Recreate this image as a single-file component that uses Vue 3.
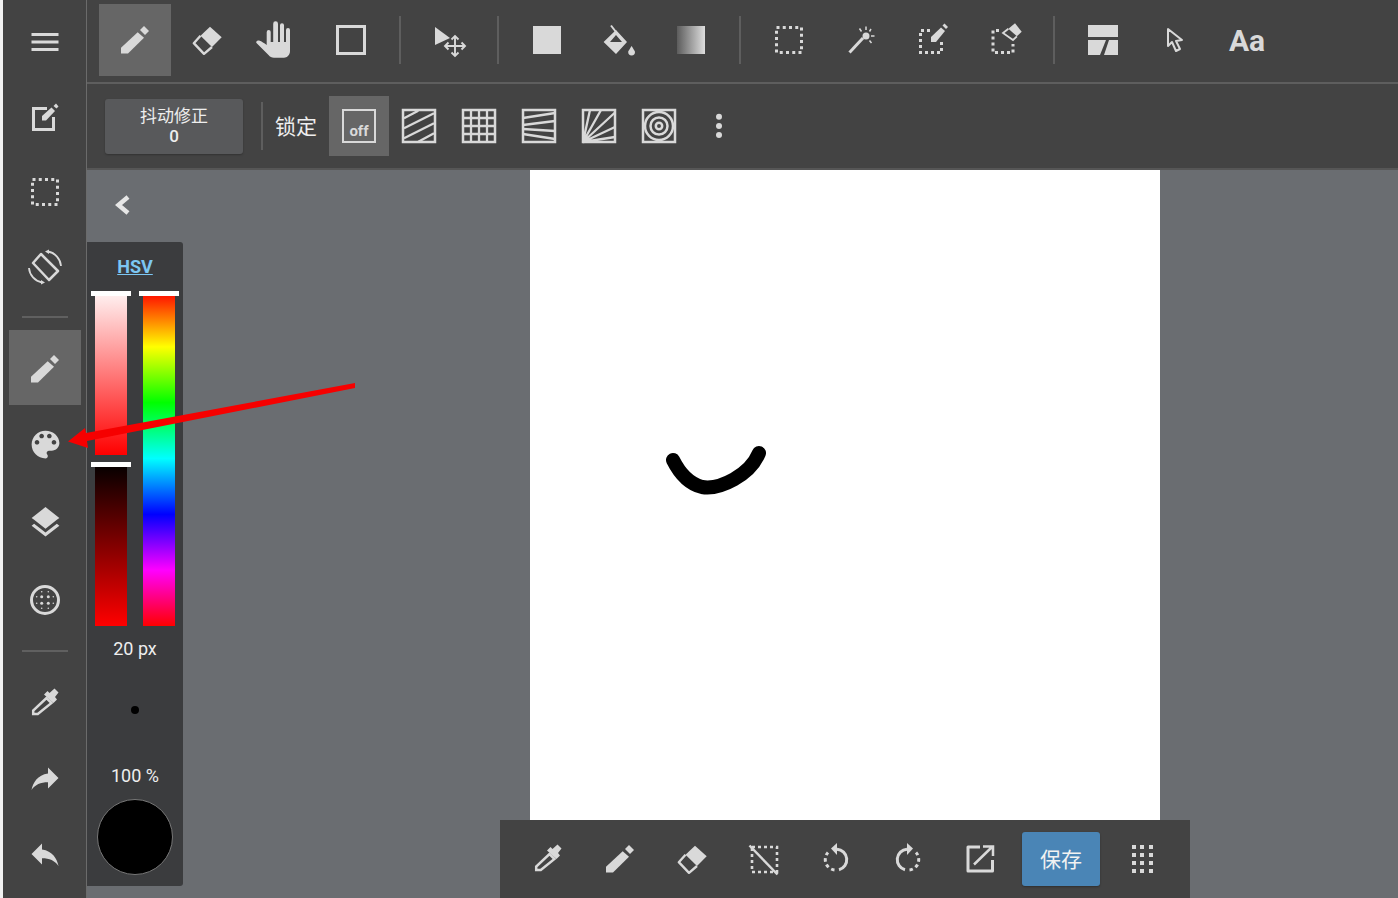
<template>
  <div class="app">
    <!-- shared icons -->
    <svg class="defs" aria-hidden="true">
      <symbol id="i-pencil" viewBox="0 0 40 40">
        <path d="M6 33.5V27.7L22.7 12.3 29 17.7 13 33.5Z" />
        <path d="M25 10 29 6 34 11 30 15Z" />
      </symbol>
      <symbol id="i-eraser" viewBox="0 0 40 40">
        <path d="M13.5 15.8 23 6.7 34.7 17.3 25 27Z" />
        <path d="M13.5 15.8 6.8 23.2 17 33.8 25 27" fill="none" stroke="#d9d9d9" stroke-width="2.4" stroke-linejoin="round" />
      </symbol>
      <symbol id="i-dropper" viewBox="0 0 40 40">
        <path d="M19 11.5 22.5 8 24.5 10 29.5 5.5 33.5 9.5 30 14 32 16.5 28.5 20Z" />
        <path d="M8.2 31V27.5L21.5 15 26.5 20 12.8 31Z" fill="none" stroke="#d9d9d9" stroke-width="2.5" />
      </symbol>
      <symbol id="i-dotted" viewBox="0 0 40 40">
        <rect x="7.5" y="7.5" width="25" height="25" fill="none" stroke="#d9d9d9" stroke-width="3" stroke-dasharray="3 3.25" />
      </symbol>
      <symbol id="i-reply" viewBox="0 0 24 24">
        <path d="M10 9V5l-7 7 7 7v-4.1c5 0 8.5 1.6 11 5.1-1-5-4-10-11-11z" />
      </symbol>
      <symbol id="i-circle-arrow" viewBox="0 0 40 40">
        <path d="M15 9.5 21 4V16Z" />
        <path d="M21 10.2A10.5 10.5 0 0 1 23 30.8" fill="none" stroke="#d9d9d9" stroke-width="3" />
        <path d="M18.5 31A10.5 10.5 0 0 1 12 13.5" fill="none" stroke="#d9d9d9" stroke-width="3" stroke-dasharray="3.5 3" />
      </symbol>
    </svg>

    <div class="edge"></div>

    <aside class="sidebar">
      <div class="side-btn">
        <svg class="ic" viewBox="0 0 40 40"><path d="M6.5 11h27v3h-27zM6.5 18.5h27v3h-27zM6.5 26h27v3h-27z" /></svg>
      </div>
      <div class="side-btn">
        <svg class="ic" viewBox="0 0 40 40">
          <path d="M22 11.5H8.5V32.5H28.5V20" fill="none" stroke="#d9d9d9" stroke-width="3" />
          <path d="M17 23.5V19L26.5 10.5 30 14 21 23.5Z" />
          <path d="M28.5 9 31 6.5 33.5 9.5 31.5 11.5Z" />
        </svg>
      </div>
      <div class="side-btn"><svg class="ic"><use href="#i-dotted" /></svg></div>
      <div class="side-btn">
        <svg class="ic" viewBox="0 0 40 40">
          <path d="M16 7 33 24 24 33 8 16Z" fill="none" stroke="#d9d9d9" stroke-width="2.5" stroke-linejoin="round" />
          <path d="M23 4.5A16 16 0 0 1 36 19M4 21A16 16 0 0 0 17 35.5" fill="none" stroke="#d9d9d9" stroke-width="1.8" />
          <path d="M20 4.5 24 2.5V7ZM20 35.5 16 33V37.5Z" />
        </svg>
      </div>
      <div class="side-sep first"></div>
      <div class="side-btn active"><svg class="ic"><use href="#i-pencil" /></svg></div>
      <div class="side-btn h78">
        <svg class="ic-md" viewBox="0 0 24 24">
          <path d="M12 3c-4.97 0-9 4.03-9 9s4.03 9 9 9c.83 0 1.5-.67 1.5-1.5 0-.39-.15-.74-.39-1.01-.23-.26-.38-.61-.38-.99 0-.83.67-1.5 1.5-1.5H16c2.76 0 5-2.24 5-5 0-4.42-4.03-8-9-8zm-5.5 9c-.83 0-1.5-.67-1.5-1.5S5.67 9 6.5 9 8 9.67 8 10.5 7.33 12 6.5 12zm3-4C8.67 8 8 7.33 8 6.5S8.67 5 9.5 5s1.5.67 1.5 1.5S10.33 8 9.5 8zm5 0c-.83 0-1.5-.67-1.5-1.5S13.67 5 14.5 5s1.5.67 1.5 1.5S15.33 8 14.5 8zm3 4c-.83 0-1.5-.67-1.5-1.5S16.67 9 17.5 9s1.5.67 1.5 1.5-.67 1.5-1.5 1.5z" />
        </svg>
      </div>
      <div class="side-btn h78">
        <svg class="ic-md" viewBox="0 0 24 24">
          <path d="M11.99 18.54l-7.37-5.73L3 14.07l9 7 9-7-1.63-1.27-7.38 5.74zM12 16l7.36-5.73L21 9l-9-7-9 7 1.63 1.27L12 16z" />
        </svg>
      </div>
      <div class="side-btn h78">
        <svg class="ic" viewBox="0 0 40 40">
          <circle cx="20" cy="20" r="13.5" fill="none" stroke="#d9d9d9" stroke-width="3" />
          <circle v-for="d in gridDots" :key="d.k" :cx="d.x" :cy="d.y" :r="d.r" />
        </svg>
      </div>
      <div class="side-sep second"></div>
      <div class="side-btn h76"><svg class="ic"><use href="#i-dropper" /></svg></div>
      <div class="side-btn h76">
        <svg class="ic-reply"><use href="#i-reply" transform="matrix(-1 0 0 1 36 -1)" width="36" height="36" /></svg>
      </div>
      <div class="side-btn h76">
        <svg class="ic-reply"><use href="#i-reply" y="-1" width="36" height="36" /></svg>
      </div>
    </aside>

    <main class="main">
      <div class="toolbar">
        <div class="tool active"><svg class="ic"><use href="#i-pencil" /></svg></div>
        <div class="tool"><svg class="ic"><use href="#i-eraser" /></svg></div>
        <div class="tool">
          <svg class="ic over" viewBox="0 0 40 40">
            <path d="M7.7 12a2 2 0 0 1 4 0V22h2.5V3.7a2.4 2.4 0 0 1 4.8 0V22H21V5.3a2 2 0 0 1 4 0V22h2V10a2 2 0 0 1 4 0V31c0 4-3 6.7-6 6.7H15c-2.5 0-4-1-5.5-2.7L-2.5 23c-1-1.2.5-3 2.5-2.5 3 1 5 2.5 7.7 4.5Z" />
          </svg>
        </div>
        <div class="tool">
          <svg class="ic" viewBox="0 0 40 40"><rect x="6.5" y="6.5" width="27" height="27" fill="none" stroke="#d9d9d9" stroke-width="3" /></svg>
        </div>
        <div class="sep"></div>
        <div class="tool">
          <svg class="ic" viewBox="0 0 40 40">
            <path d="M6 7V25L21 18Z" />
            <path d="M16 26H36M26 16V36M19.5 22.5 16 26 19.5 29.5M32.5 22.5 36 26 32.5 29.5M22.5 19.5 26 16 29.5 19.5M22.5 32.5 26 36 29.5 32.5" fill="none" stroke="#d9d9d9" stroke-width="1.9" />
          </svg>
        </div>
        <div class="sep"></div>
        <div class="tool">
          <svg class="ic" viewBox="0 0 40 40"><rect x="6" y="6" width="28" height="28" /></svg>
        </div>
        <div class="tool">
          <svg class="ic" viewBox="0 0 40 40">
            <path fill-rule="evenodd" d="M17 10 28 22 17 34 4.6 22ZM17 15 11 22H23Z" />
            <path d="M12 5.5 17 12" stroke="#d9d9d9" stroke-width="2" />
            <path d="M32.6 26C35 30 36 31 36 32a3.4 3.4 0 0 1-6.8 0C29.2 31 30.2 30 32.6 26Z" />
          </svg>
        </div>
        <div class="tool"><div class="grad"></div></div>
        <div class="sep"></div>
        <div class="tool"><svg class="ic"><use href="#i-dotted" /></svg></div>
        <div class="tool">
          <svg class="ic" viewBox="0 0 40 40">
            <path d="M8.5 32.6 22 18" stroke="#d9d9d9" stroke-width="3" />
            <circle cx="25" cy="16" r="3.5" />
            <path d="M25 10V6.5M20.5 11.5 18.5 8.5M28.5 11.5 30 9M30 16H33.5M28.5 20.5 30.5 23" stroke="#d9d9d9" stroke-width="1.5" />
          </svg>
        </div>
        <div class="tool">
          <svg class="ic" viewBox="0 0 40 40">
            <path d="M17 10.5H7.5V32.5H28.5V21" fill="none" stroke="#d9d9d9" stroke-width="3" stroke-dasharray="3 3" />
            <path d="M18 22V17L28 7.5 32 11 23 22Z" />
            <path d="M29.5 5.5 31.5 3.5 35 7 33 9Z" />
          </svg>
        </div>
        <div class="tool">
          <svg class="ic" viewBox="0 0 40 40">
            <path d="M14 10.5H8V32.5H28V24" fill="none" stroke="#d9d9d9" stroke-width="3" stroke-dasharray="3 3" />
            <path d="M23.4 8.7 30 3.3 36.7 11.7 31.9 16.3Z" />
            <path d="M23.4 8.7 18 13 28 20 31.9 16.3" fill="none" stroke="#d9d9d9" stroke-width="1.8" />
          </svg>
        </div>
        <div class="sep"></div>
        <div class="tool">
          <svg class="ic" viewBox="0 0 40 40">
            <path d="M5 5H35V17H5ZM5 20H23L17 35H5ZM26 20H35V35H21Z" />
          </svg>
        </div>
        <div class="tool">
          <svg class="ic" viewBox="0 0 40 40">
            <path d="M13 9V26L17 22 21 31 25 29 21 21 27 20Z" fill="none" stroke="#d9d9d9" stroke-width="2" stroke-linejoin="round" />
          </svg>
        </div>
        <div class="tool aa">Aa</div>
      </div>

      <div class="subbar">
        <div class="shake">
          <span>抖动修正</span>
          <span class="shake-val">0</span>
        </div>
        <div class="sep sub-sep"></div>
        <div class="lock-label">锁定</div>
        <div class="lock active">
          <div class="off-box">off</div>
        </div>
        <div class="lock">
          <svg class="ic" viewBox="0 0 40 40">
            <rect x="4" y="4" width="32" height="32" />
            <path d="M5 12.3 19.3 4.7M5 22.3 35 7.3M5 32.3 35 17.3M19.3 35.7 35 27.3" />
          </svg>
        </div>
        <div class="lock">
          <svg class="ic" viewBox="0 0 40 40">
            <rect x="4" y="4" width="32" height="32" />
            <path d="M12 4V36M20 4V36M28 4V36M4 12H36M4 20H36M4 28H36" />
          </svg>
        </div>
        <div class="lock">
          <svg class="ic" viewBox="0 0 40 40">
            <rect x="4" y="4" width="32" height="32" />
            <path d="M4 12 36 7M4 19 36 15M4 23 36 25M4 28 36 33" />
          </svg>
        </div>
        <div class="lock">
          <svg class="ic" viewBox="0 0 40 40">
            <rect x="4" y="4" width="32" height="32" />
            <path d="M4 36 11 4M4 36 22 4M4 36 36 6.5M4 36 36 21M4 36 36 31" />
          </svg>
        </div>
        <div class="lock">
          <svg class="ic" viewBox="0 0 40 40">
            <rect x="4" y="4" width="32" height="32" />
            <circle cx="20" cy="20" r="14" />
            <circle cx="20" cy="20" r="8.5" />
            <circle cx="20" cy="20" r="3.2" />
          </svg>
        </div>
        <div class="lock">
          <svg class="ic" viewBox="0 0 40 40">
            <circle class="dot" cx="20" cy="10.7" r="3" />
            <circle class="dot" cx="20" cy="20" r="3" />
            <circle class="dot" cx="20" cy="29" r="3" />
          </svg>
        </div>
      </div>

      <div class="workspace">
        <div class="left-col">
          <div class="chevron">
            <svg class="ic" viewBox="0 0 40 40">
              <path d="M25 12 15.5 20 25 28" fill="none" stroke="#e6e6e6" stroke-width="4.5" />
            </svg>
          </div>
          <section class="panel">
            <div class="hsv">HSV</div>
            <div class="sliders">
              <div class="stack">
                <div class="bar sat"><i class="handle"></i></div>
                <div class="bar val"><i class="handle"></i></div>
              </div>
              <div class="bar hue"><i class="handle"></i></div>
            </div>
            <div class="size-label">20 px</div>
            <div class="size-dot"><span></span></div>
            <div class="alpha-label">100 %</div>
            <div class="swatch"></div>
          </section>
        </div>

        <div class="canvas-col">
          <div class="canvas">
            <svg class="stroke" viewBox="0 0 630 650">
              <path d="M143 290C150 304 160 314 172 317 190 320 220 305 229 283" fill="none" stroke="#000" stroke-width="14" stroke-linecap="round" />
            </svg>
          </div>
          <div class="bottombar">
            <div class="tool bottom"><svg class="ic"><use href="#i-dropper" /></svg></div>
            <div class="tool bottom"><svg class="ic"><use href="#i-pencil" /></svg></div>
            <div class="tool bottom"><svg class="ic"><use href="#i-eraser" /></svg></div>
            <div class="tool bottom">
              <svg class="ic" viewBox="0 0 40 40">
                <rect x="8" y="8" width="25" height="25" fill="none" stroke="#d9d9d9" stroke-width="2.6" stroke-dasharray="3 3" />
                <path d="M5.5 6.5 33.5 35.5" stroke="#d9d9d9" stroke-width="2.5" />
              </svg>
            </div>
            <div class="tool bottom"><svg class="ic"><use href="#i-circle-arrow" /></svg></div>
            <div class="tool bottom">
              <svg class="ic mirror"><use href="#i-circle-arrow" /></svg>
            </div>
            <div class="tool bottom">
              <svg class="ic" viewBox="0 0 40 40">
                <path d="M20 8H8V32H32.5V21" fill="none" stroke="#d9d9d9" stroke-width="3" stroke-linejoin="round" />
                <path d="M14 25.5 32.5 7.5M23 7.5H33V17" fill="none" stroke="#d9d9d9" stroke-width="2.5" />
              </svg>
            </div>
            <div class="save">保存</div>
            <div class="tool bottom">
              <div class="apps"><i v-for="n in 12" :key="n"></i></div>
            </div>
          </div>
        </div>
      </div>
    </main>

    <!-- red annotation arrow on top of the screenshot -->
    <svg class="annotation" viewBox="0 0 1398 898">
      <path d="M355 383 355 388 87 441 88 448 68 441.5 85 428 86 433Z" fill="#f60000" />
    </svg>
  </div>
</template>

<script setup>
const offsets = [-8.3, -3.3, 3.3, 8.3]
const gridDots = []
for (const x of offsets) {
  for (const y of offsets) {
    if (Math.abs(x) > 5 && Math.abs(y) > 5) continue
    gridDots.push({
      k: x + '_' + y,
      x: 20 + x,
      y: 20 + y,
      r: Math.abs(x) < 5 && Math.abs(y) < 5 ? 1.5 : 0.8
    })
  }
}
</script>

<style>
body { margin: 0; overflow: hidden; background: #434343; }
</style>

<style scoped>
.app { position: relative; display: flex; width: 1398px; height: 898px; overflow: hidden; font-family: Roboto, "Noto Sans CJK SC", sans-serif; color: #eee; background: #434343; }
.defs { position: absolute; width: 0; height: 0; }
svg { fill: #d9d9d9; }
.ic { display: block; width: 40px; height: 40px; }
.ic.over { overflow: visible; }
.ic.mirror { transform: scaleX(-1); }
.ic-md { display: block; width: 37px; height: 37px; }
.ic-reply { display: block; width: 36px; height: 36px; }

.edge { width: 3px; flex: none; background: #f2f2f2; }

.sidebar { width: 84px; flex: none; box-sizing: border-box; padding: 5px 5px 0 6px; border-right: 1px solid #6b6b6b; display: flex; flex-direction: column; align-items: stretch; }
.side-btn { height: 75px; flex: none; display: flex; align-items: center; justify-content: center; }
.side-btn .ic { margin-top: -1px; }
.side-btn.active { background: #666; }
.side-btn.active .ic { margin-top: 3px; }
.side-btn.h78 { height: 78px; }
.side-btn.h78 .ic, .side-btn.h76 .ic { margin-top: 0; }
.side-btn.h76 { height: 76px; }
.side-sep { height: 2px; flex: none; margin: 0 13px; background: #606060; }
.side-sep.first { margin-top: 11px; margin-bottom: 12px; }
.side-sep.second { margin-top: 11px; margin-bottom: 13px; }

.main { flex: 1; min-width: 0; display: flex; flex-direction: column; }

.toolbar { height: 84px; flex: none; box-sizing: border-box; padding: 4px 0 0 12px; display: flex; align-items: flex-start; border-bottom: 2px solid #5e5e5e; }
.tool { width: 72px; height: 72px; flex: none; display: flex; align-items: center; justify-content: center; }
.tool.active { background: #666; }
.tool.bottom { height: 78px; }
.sep { width: 2px; height: 48px; flex: none; margin: 12px 12px 0; background: #5e5e5e; }
.grad { width: 28px; height: 28px; background: linear-gradient(to right, #5c5c5c, #dedede); }
.aa { font-size: 30px; font-weight: 700; color: #d9d9d9; }

.subbar { height: 86px; flex: none; box-sizing: border-box; padding-left: 18px; display: flex; align-items: center; border-bottom: 2px solid #565656; }
.shake { width: 138px; height: 55px; flex: none; box-sizing: border-box; padding-top: 7px; border-radius: 3px; background: #58595b; box-shadow: 0 1px 2px rgba(0,0,0,.25); display: flex; flex-direction: column; align-items: center; font-size: 17px; line-height: 20px; }
.shake-val { font-weight: 500; font-size: 17px; }
.sub-sep { margin: 0 0 0 18px; }
.lock-label { width: 42px; flex: none; margin: 0 12px; padding-bottom: 2px; font-size: 21px; }
.lock { width: 60px; height: 60px; flex: none; display: flex; align-items: center; justify-content: center; }
.lock svg rect, .lock svg circle { fill: none; stroke: #d9d9d9; stroke-width: 2.5; }
.lock svg path { fill: none; stroke: #d9d9d9; stroke-width: 2.3; }
.lock svg .dot { fill: #d9d9d9; stroke: none; }
.lock.active { background: #666; }
.off-box { width: 34px; height: 34px; box-sizing: border-box; border: 2.5px solid #d9d9d9; display: flex; align-items: flex-end; justify-content: center; font-size: 15px; font-weight: 700; line-height: 19px; color: #d9d9d9; }

.workspace { flex: 1; min-height: 0; display: flex; background: #6a6d71; }
.left-col { width: 96px; flex: none; }
.chevron { height: 70px; margin-bottom: 2px; padding-left: 16px; display: flex; align-items: center; }
.panel { width: 96px; height: 644px; border-radius: 0 3px 3px 0; background: #3b3c3e; display: flex; flex-direction: column; align-items: center; }
.hsv { height: 49px; line-height: 49px; font-size: 18px; font-weight: 700; color: #7cc6f2; text-decoration: underline; }
.sliders { height: 335px; width: 80px; display: flex; justify-content: space-between; flex: none; }
.stack { width: 32px; display: flex; flex-direction: column; justify-content: space-between; }
.bar { position: relative; width: 32px; }
.sat { height: 164px; background: linear-gradient(to bottom, #fff5f5, #ff0000); }
.val { height: 164px; background: linear-gradient(to bottom, #000, #ff0000); }
.hue { height: 335px; background: linear-gradient(to bottom, #f00, #ff0 16.67%, #0f0 33.33%, #0ff 50%, #00f 66.67%, #f0f 83.33%, #f00); }
.handle { position: absolute; left: -4px; top: 0; width: 40px; height: 5px; background: #fff; }
.size-label { height: 46px; line-height: 46px; font-size: 18px; flex: none; }
.size-dot { height: 76px; margin-bottom: 8px; flex: none; display: flex; align-items: center; justify-content: center; }
.size-dot span { width: 8px; height: 8px; border-radius: 50%; background: #000; }
.alpha-label { height: 40px; line-height: 40px; font-size: 18px; flex: none; }
.swatch { width: 76px; height: 76px; box-sizing: border-box; margin-top: 3px; border: 1px solid #777; border-radius: 50%; background: #000; flex: none; }

.canvas-col { width: 690px; margin-left: 317px; flex: none; display: flex; flex-direction: column; align-items: center; }
.canvas { width: 630px; height: 650px; flex: none; background: #fff; }
.stroke { display: block; width: 630px; height: 650px; }
.bottombar { width: 690px; height: 78px; flex: none; box-sizing: border-box; padding-left: 12px; display: flex; align-items: center; background: #434343; }
.save { width: 78px; height: 54px; flex: none; box-sizing: border-box; padding-bottom: 2px; margin: 0 6px; border-radius: 3px; background: #4a85b6; box-shadow: 0 1px 2px rgba(0,0,0,.3); display: flex; align-items: center; justify-content: center; font-size: 21px; color: #f2f2f2; }
.apps { display: grid; grid-template-columns: repeat(3, 4px); grid-auto-rows: 4px; column-gap: 4.5px; row-gap: 4px; }
.apps i { background: #d9d9d9; }

.annotation { position: absolute; left: 0; top: 0; width: 1398px; height: 898px; pointer-events: none; }
</style>
